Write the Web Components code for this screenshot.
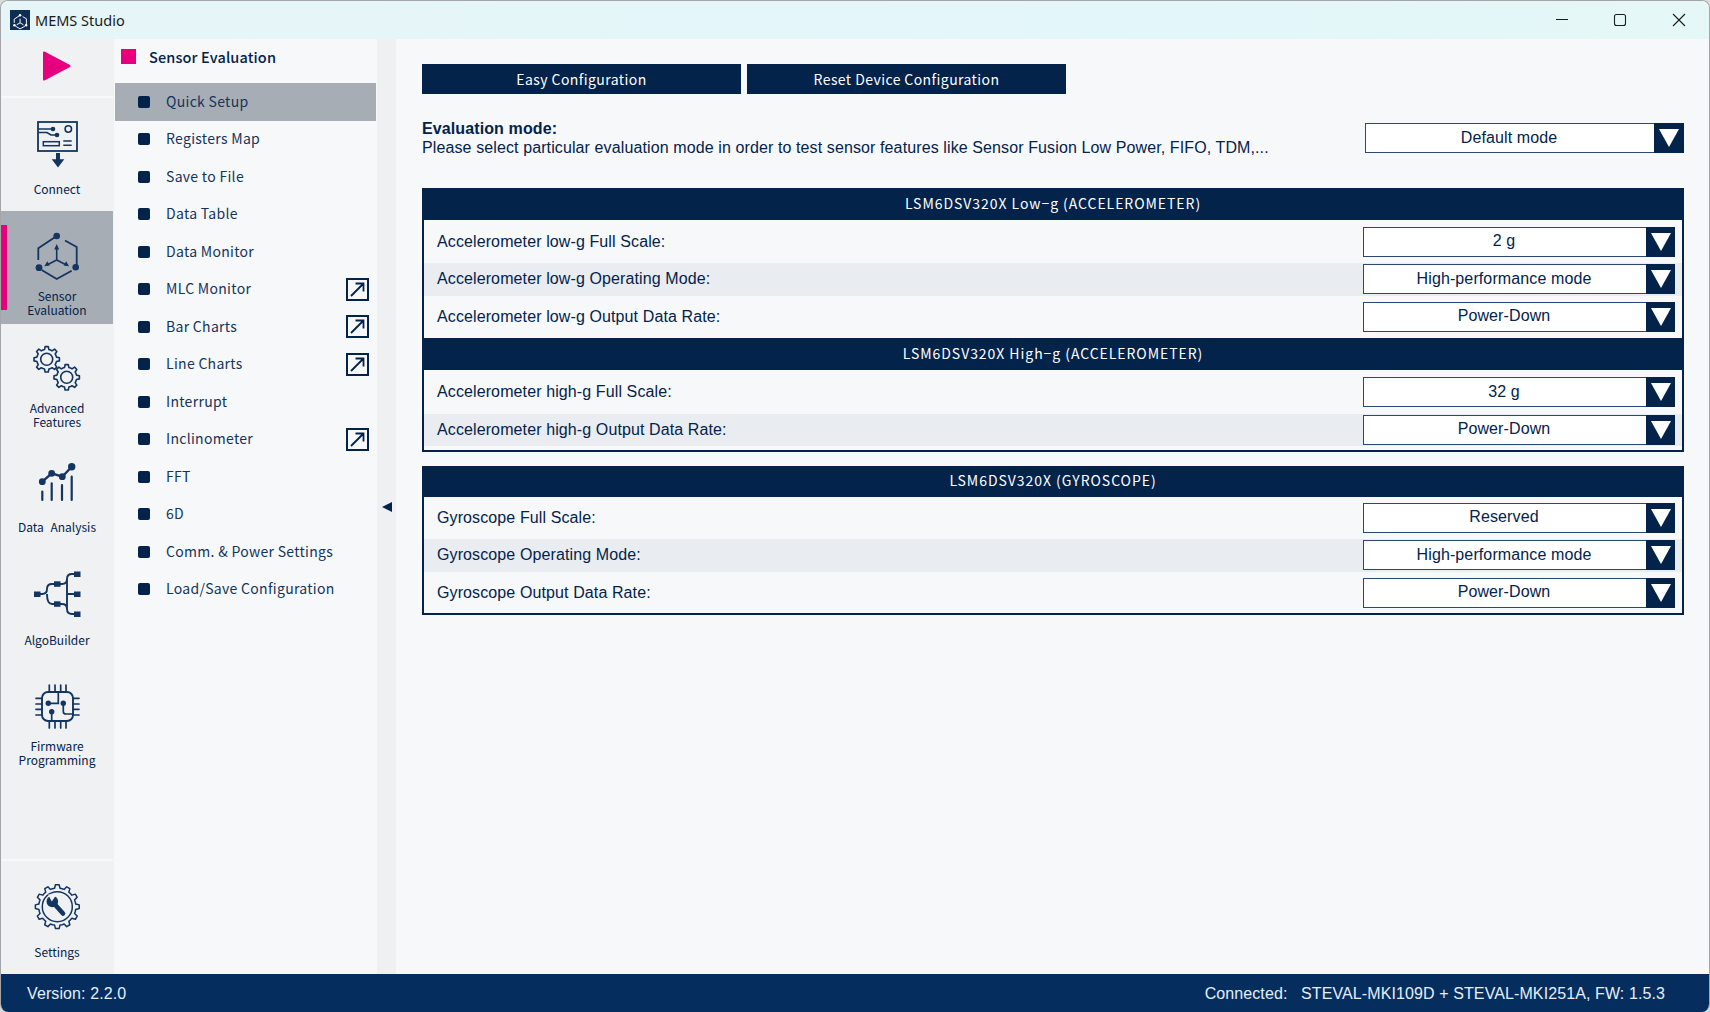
<!DOCTYPE html>
<html lang="en">
<head>
<meta charset="utf-8">
<title>MEMS Studio</title>
<style>
	html, body { margin: 0; height: 100%; background: #d9dbdd; }
	body { font-family: "Liberation Sans", Arial, sans-serif; color: #03234b; }
</style>
</head>
<body>
<app-window>
	<title-bar slot="title">MEMS Studio</title-bar>

	<side-rail slot="rail">
		<rail-item icon="connect">Connect</rail-item>
		<rail-item icon="sensor" active style="--lift: -1px">Sensor<br>Evaluation</rail-item>
		<rail-item icon="gears">Advanced<br>Features</rail-item>
		<rail-item icon="analysis" style="--lift: -5px">Data Analysis</rail-item>
		<rail-item icon="algo" style="--lift: -4px">AlgoBuilder</rail-item>
		<rail-item icon="chip" style="--lift: -4px">Firmware<br>Programming</rail-item>
		<rail-item icon="settings" slot="bottom">Settings</rail-item>
	</side-rail>

	<sub-nav slot="nav" heading="Sensor Evaluation">
		<nav-row selected>Quick Setup</nav-row>
		<nav-row>Registers Map</nav-row>
		<nav-row>Save to File</nav-row>
		<nav-row>Data Table</nav-row>
		<nav-row>Data Monitor</nav-row>
		<nav-row popout>MLC Monitor</nav-row>
		<nav-row popout>Bar Charts</nav-row>
		<nav-row popout>Line Charts</nav-row>
		<nav-row>Interrupt</nav-row>
		<nav-row popout>Inclinometer</nav-row>
		<nav-row>FFT</nav-row>
		<nav-row>6D</nav-row>
		<nav-row>Comm. &amp; Power Settings</nav-row>
		<nav-row>Load/Save Configuration</nav-row>
	</sub-nav>

	<main-pane slot="main">
		<action-button slot="actions">Easy Configuration</action-button>
		<action-button slot="actions">Reset Device Configuration</action-button>

		<strong slot="mode-title">Evaluation mode:</strong>
		<span slot="mode-text">Please select particular evaluation mode in order to test sensor features like Sensor Fusion Low Power, FIFO, TDM,...</span>
		<drop-down slot="mode-select" wide>Default mode</drop-down>

		<config-panel>
			<panel-head>LSM6DSV320X Low−g (ACCELEROMETER)</panel-head>
			<config-row value="2 g">Accelerometer low-g Full Scale:</config-row>
			<config-row value="High-performance mode" alt>Accelerometer low-g Operating Mode:</config-row>
			<config-row value="Power-Down">Accelerometer low-g Output Data Rate:</config-row>
			<panel-head>LSM6DSV320X High−g (ACCELEROMETER)</panel-head>
			<config-row value="32 g">Accelerometer high-g Full Scale:</config-row>
			<config-row value="Power-Down" alt>Accelerometer high-g Output Data Rate:</config-row>
		</config-panel>

		<config-panel>
			<panel-head tight>LSM6DSV320X (GYROSCOPE)</panel-head>
			<config-row value="Reserved">Gyroscope Full Scale:</config-row>
			<config-row value="High-performance mode" alt>Gyroscope Operating Mode:</config-row>
			<config-row value="Power-Down">Gyroscope Output Data Rate:</config-row>
		</config-panel>
	</main-pane>

	<status-bar slot="status">
		<span>Version: 2.2.0</span>
		<span slot="right">Connected:&nbsp;&nbsp;&nbsp;STEVAL-MKI109D + STEVAL-MKI251A, FW: 1.5.3</span>
	</status-bar>
</app-window>

<script>
const NAVY = '#03234b';
const UI_FONT = '"Noto Sans CJK JP", "Noto Sans", sans-serif';

// Outline of a cog wheel, used by the two gear icons
const gearPath = (cx, cy, rOut, rIn, teeth) => {
	let d = '';
	const step = (Math.PI * 2) / teeth;
	for (let i = 0; i < teeth; i++) {
		const a = i * step;
		const pts = [
			[rIn, a - step * 0.5],
			[rIn, a - step * 0.28],
			[rOut, a - step * 0.16],
			[rOut, a + step * 0.16],
			[rIn, a + step * 0.28],
		];
		pts.forEach((p, j) => {
			const x = (cx + p[0] * Math.cos(p[1])).toFixed(2);
			const y = (cy + p[0] * Math.sin(p[1])).toFixed(2);
			d += (i === 0 && j === 0 ? 'M' : 'L') + x + ' ' + y + ' ';
		});
	}
	return d + 'Z';
};

// Rail icons share one 60x78 box, drawn in the item's own coordinates
const ICONS = {
	connect: `<g transform="translate(0 -1)">
		<rect x="11" y="25" width="39" height="29" fill="none" stroke-width="1.8"/>
		<path d="M11 32H26M11 35.5H20L24 38H30" fill="none" stroke-width="1.6"/>
		<circle cx="26" cy="32" r="2.3" stroke="none"/>
		<circle cx="30" cy="38" r="2.3" stroke="none"/>
		<circle cx="41.3" cy="32" r="3.2" fill="none" stroke-width="1.6"/>
		<rect x="16.3" y="44.7" width="16" height="4" fill="none" stroke-width="1.5"/>
		<path d="M36.3 44H44.7M36.3 48.2H44.7" fill="none" stroke-width="1.5"/>
		<path d="M29 56H33V62.3H37.3L31 70.5L24.7 62.3H29Z" stroke="none"/></g>`,
	sensor: `
		<path d="M29.7 25L11.3 37.3V49M38 29.5L49.7 36V56M14.7 59L29.7 68L44.7 59.7" fill="none" stroke-width="1.8"/>
		<circle cx="29.7" cy="25" r="3.3" stroke="none"/>
		<circle cx="12" cy="56.7" r="3.4" stroke="none"/>
		<circle cx="48.7" cy="56.3" r="3.3" stroke="none"/>
		<path d="M29.7 49V37M29.7 49L20 54M29.7 49L39.4 54" fill="none" stroke-width="1.6"/>
		<path d="M29.7 33L32.2 38.5H27.2ZM17.3 55.3L20.3 50.3L22.8 54.6ZM42.1 55.3L39.1 50.3L36.6 54.6Z" stroke="none"/>`,
	gears: `
		<path d="${gearPath(19.7, 35.3, 12.8, 10, 8)}" fill="none" stroke-width="1.6" stroke-linejoin="round"/>
		<circle cx="19.7" cy="35.3" r="6" fill="none" stroke-width="1.6"/>
		<path d="${gearPath(39.7, 53.3, 12.8, 10, 8)}" fill="none" stroke-width="1.6" stroke-linejoin="round"/>
		<circle cx="39.7" cy="53.3" r="6" fill="none" stroke-width="1.6"/>`,
	analysis: `
		<path d="M15.3 44.7L24.7 36.3L35.3 39.7L44.7 29.7" fill="none" stroke-width="2.4"/>
		<circle cx="15.3" cy="44.7" r="3.4" stroke="none"/>
		<circle cx="24.7" cy="36.3" r="3.4" stroke="none"/>
		<circle cx="35.3" cy="39.7" r="3.4" stroke="none"/>
		<circle cx="44.7" cy="29.7" r="3.7" stroke="none"/>
		<path d="M15.3 54.5V63M24.7 46.3V63M35 48V63M44.7 39.7V63" fill="none" stroke-width="2.2" stroke-linecap="round"/>`,
	algo: `
		<path d="M10 44H15Q20 44 20 39Q20 34 25 34H35Q40 34 40 29Q40 24 45 24H50M20 44Q20 54 25 54H35Q40 54 40 59Q40 64 45 64H50M40 29V59M40 44H50" fill="none" stroke-width="1.9"/>
		<rect x="7" y="41.5" width="6.5" height="5.5" stroke="none"/>
		<rect x="27" y="31.3" width="6.5" height="5.5" stroke="none"/>
		<rect x="27" y="51.3" width="6.5" height="5.5" stroke="none"/>
		<rect x="47" y="21.5" width="6.5" height="5.5" stroke="none"/>
		<rect x="47" y="41.5" width="6.5" height="5.5" stroke="none"/>
		<rect x="47" y="61.5" width="6.5" height="5.5" stroke="none"/>`,
	chip: `
		<rect x="15" y="29" width="31" height="29" rx="6" fill="none" stroke-width="1.9"/>
		<path d="M22.3 22V29M28 22V29M33.7 22V29M39 22V29M22.3 58V65M28 58V65M33.7 58V65M39 58V65M9 35.3H15M9 41H15M9 46.3H15M9 52H15M46 35.3H52M46 41H52M46 46.3H52M46 52H52" fill="none" stroke-width="1.7" stroke-linecap="round"/>
		<path d="M21.3 40.3H31.3V29.5M36.3 40V48.5Q36.3 51 39 51H46M24.7 48.7V58" fill="none" stroke-width="1.7"/>
		<circle cx="21.3" cy="40.3" r="2.7" stroke="none"/>
		<circle cx="36.3" cy="40.3" r="2.7" stroke="none"/>
		<circle cx="24.7" cy="48.7" r="2.7" stroke="none"/>`,
	settings: `
		<path d="${gearPath(30.3, 45.7, 22, 18.6, 12)}" fill="none" stroke-width="1.5" stroke-linejoin="round"/>
		<circle cx="30.3" cy="45.7" r="15" fill="none" stroke-width="1.5"/>
		<path d="M27 42.5L36 52.5" fill="none" stroke-width="4.6" stroke-linecap="round"/>
		<circle cx="25.3" cy="40.5" r="5.8" stroke="none"/>
		<path d="M24.8 40.6L21 33.5L29.5 33.5Z" fill="#eff1f3" stroke="none"/>`,
};

class AppWindow extends HTMLElement {
	constructor() {
		super();
		this.attachShadow({ mode: 'open' }).innerHTML = `
			<style>
				:host {
					display: flex;
					flex-direction: column;
					box-sizing: border-box;
					width: 1710px;
					height: 1012px;
					border: 1px solid #a3a5a8;
					border-bottom: 0;
					border-radius: 8px;
					overflow: hidden;
					background: #f7f8fa;
				}
				.body { flex: 1; display: flex; min-height: 0; }
				.splitter {
					width: 19px;
					background: #eff0f2;
					display: flex;
					align-items: center;
					justify-content: center;
				}
				.splitter i {
					width: 0; height: 0;
					border-style: solid;
					border-width: 5px 10px 5px 0;
					border-color: transparent ${NAVY} transparent transparent;
				}
			</style>
			<slot name="title"></slot>
			<div class="body">
				<slot name="rail"></slot>
				<slot name="nav"></slot>
				<div class="splitter"><i></i></div>
				<slot name="main"></slot>
			</div>
			<slot name="status"></slot>`;
	}
}

class TitleBar extends HTMLElement {
	constructor() {
		super();
		this.attachShadow({ mode: 'open' }).innerHTML = `
			<style>
				:host {
					display: flex;
					align-items: center;
					flex: none;
					height: 38px;
					background: linear-gradient(90deg, #e6f5f8, #e3f6f9 70%, #e5f7f6);
					font: 14.5px "Noto Sans", sans-serif;
					color: #1b1b1b;
				}
				.logo { margin: 0 5px 0 9px; display: block; }
				.name { flex: 1; }
				.ctl { display: flex; }
				.ctl svg { display: block; width: 58px; height: 38px; }
			</style>
			<svg class="logo" width="20" height="20" viewBox="0 0 60 60">
				<rect width="60" height="60" fill="#0f2c52"/>
				<g stroke="#fff" fill="#fff" transform="translate(2 -8) scale(.95)">
					<path d="M29.7 25L11.3 37.3V49M38 29.5L49.7 36V56M14.7 59L29.7 68L44.7 59.7" fill="none" stroke-width="3"/>
					<circle cx="29.7" cy="25" r="4" stroke="none"/>
					<circle cx="12" cy="56.7" r="4" stroke="none"/>
					<circle cx="48.7" cy="56.3" r="4" stroke="none"/>
					<path d="M29.7 49V36M29.7 49L19 55M29.7 49L40.4 55" fill="none" stroke-width="3"/>
				</g>
			</svg>
			<span class="name"><slot></slot></span>
			<div class="ctl">
				<svg viewBox="0 0 58 38"><path d="M21 18.5H33" stroke="#1b1b1b" fill="none"/></svg>
				<svg viewBox="0 0 58 38"><rect x="21.5" y="13.5" width="11" height="11" rx="2" stroke="#1b1b1b" stroke-width="1.1" fill="none"/></svg>
				<svg viewBox="0 0 58 38"><path d="M22 13L34 25M34 13L22 25" stroke="#1b1b1b" stroke-width="1.1" fill="none"/></svg>
			</div>`;
	}
}

class SideRail extends HTMLElement {
	constructor() {
		super();
		this.attachShadow({ mode: 'open' }).innerHTML = `
			<style>
				:host {
					display: flex;
					flex-direction: column;
					flex: none;
					width: 112px;
					height: 100%;
					background: #eff1f3;
				}
				.play {
					flex: none;
					height: 57px;
					display: flex;
					align-items: center;
					justify-content: center;
					border-bottom: 2px solid #f7f8fa;
				}
				.play svg { display: block; margin-top: -3px; }
				.list { flex: 1; }
				.bottom { flex: none; border-top: 2px solid #f7f8fa; }
			</style>
			<div class="play">
				<svg width="30" height="32" viewBox="0 0 30 32">
					<path d="M2 2.5L27.5 16L2 29.5Z" fill="#e6007e" stroke="#e6007e" stroke-width="2" stroke-linejoin="round"/>
				</svg>
			</div>
			<div class="list"><slot></slot></div>
			<div class="bottom"><slot name="bottom"></slot></div>`;
	}
}

class RailItem extends HTMLElement {
	constructor() {
		super();
		this.attachShadow({ mode: 'open' }).innerHTML = `
			<style>
				:host {
					display: grid;
					grid-template-rows: 78px 28px;
					justify-items: center;
					position: relative;
					height: 113px;
					font: 12px/14px ${UI_FONT};
					word-spacing: 4px;
					color: ${NAVY};
					text-align: center;
				}
				:host([active]) { background: #a7adb5; }
				:host([active])::before {
					content: "";
					position: absolute;
					left: 0; top: 14px;
					width: 6px; height: 85px;
					background: #e6007e;
				}
				svg { display: block; width: 60px; height: 78px; overflow: visible; fill: #143560; stroke: #143560; }
				.label { align-self: center; white-space: nowrap; margin-top: var(--lift, -2px); }
			</style>
			<svg viewBox="0 0 60 78">${ICONS[this.getAttribute('icon')] || ''}</svg>
			<div class="label"><slot></slot></div>`;
	}
}

class SubNav extends HTMLElement {
	constructor() {
		super();
		this.attachShadow({ mode: 'open' }).innerHTML = `
			<style>
				:host {
					display: block;
					flex: none;
					box-sizing: border-box;
					width: 264px;
					height: 100%;
					background: #f7f8fa;
					border-left: 1px solid #eff1f3;
				}
				.head {
					display: flex;
					align-items: center;
					gap: 13px;
					height: 38px;
					box-sizing: content-box;
					padding: 0 0 6px 7px;
					font: 500 14.5px ${UI_FONT};
					letter-spacing: .13px;
					color: ${NAVY};
				}
				.head i { width: 15px; height: 15px; background: #e6007e; margin-top: -3px; }
				.head span { margin-top: -4px; }
			</style>
			<div class="head"><i></i><span>${this.getAttribute('heading')}</span></div>
			<slot></slot>`;
	}
}

class NavRow extends HTMLElement {
	constructor() {
		super();
		const popout = this.hasAttribute('popout') ? `
			<svg class="pop" width="23" height="23" viewBox="0 0 23 23">
				<rect x="1" y="1" width="21" height="21" fill="none" stroke="${NAVY}" stroke-width="2"/>
				<path d="M5 18L17 6M9.5 5.5H17.5V13.5" fill="none" stroke="${NAVY}" stroke-width="1.8"/>
			</svg>` : '';
		this.attachShadow({ mode: 'open' }).innerHTML = `
			<style>
				:host {
					display: flex;
					align-items: center;
					height: 37.5px;
					margin: 0 1px;
					padding: 0 7px 0 23px;
					font: 14px ${UI_FONT};
					letter-spacing: .3px;
					color: #14345c;
				}
				:host([selected]) { background: #a7adb5; }
				i { width: 12px; height: 12px; border-radius: 2px; background: ${NAVY}; margin-right: 16px; }
				span { flex: 1; margin-top: -2px; }
				svg { display: block; }
			</style>
			<i></i><span><slot></slot></span>${popout}`;
	}
}

class MainPane extends HTMLElement {
	constructor() {
		super();
		this.attachShadow({ mode: 'open' }).innerHTML = `
			<style>
				:host {
					display: block;
					flex: 1;
					min-width: 0;
					box-sizing: border-box;
					padding: 25px 25px 0 26px;
					font: 16px/19px "Liberation Sans", Arial, sans-serif;
					letter-spacing: .11px;
					color: ${NAVY};
				}
				.actions { display: flex; gap: 6px; }
				.mode { display: flex; align-items: center; margin: 25px 0 30.5px; }
				.mode .text { flex: 1; }
				.mode .text slot { display: block; }
				.panels { display: grid; gap: 14px; }
			</style>
			<div class="actions"><slot name="actions"></slot></div>
			<div class="mode">
				<div class="text">
					<slot name="mode-title"></slot>
					<slot name="mode-text"></slot>
				</div>
				<slot name="mode-select"></slot>
			</div>
			<div class="panels"><slot></slot></div>`;
	}
}

class ActionButton extends HTMLElement {
	constructor() {
		super();
		this.attachShadow({ mode: 'open' }).innerHTML = `
			<style>
				:host {
					display: flex;
					align-items: center;
					justify-content: center;
					width: 319px;
					height: 30px;
					background: ${NAVY};
					color: #fff;
					font: 14px ${UI_FONT};
					letter-spacing: .42px;
				}
			</style>
			<slot></slot>`;
	}
}

class ConfigPanel extends HTMLElement {
	constructor() {
		super();
		this.attachShadow({ mode: 'open' }).innerHTML = `
			<style>
				:host {
					display: grid;
					row-gap: 5px;
					box-sizing: border-box;
					border: 2px solid ${NAVY};
					border-top: 0;
					padding-bottom: 3.5px;
				}
			</style>
			<slot></slot>`;
	}
}

class PanelHead extends HTMLElement {
	constructor() {
		super();
		this.attachShadow({ mode: 'open' }).innerHTML = `
			<style>
				:host {
					display: flex;
					align-items: center;
					justify-content: center;
					height: 32px;
					margin-bottom: 1px;
					padding-bottom: 2px;
					box-sizing: border-box;
					background: ${NAVY};
					color: #fff;
					font: 14px ${UI_FONT};
					letter-spacing: .95px;
				}
				:host([tight]) { height: 31px; margin-bottom: 0; }
			</style>
			<slot></slot>`;
	}
}

class ConfigRow extends HTMLElement {
	constructor() {
		super();
		this.attachShadow({ mode: 'open' }).innerHTML = `
			<style>
				:host {
					display: flex;
					align-items: center;
					justify-content: space-between;
					height: 32.5px;
					padding: 0 7px 0 13px;
					color: ${NAVY};
				}
				:host([alt]) { background: #e9ecf1; }
				span { margin-top: -1px; }
			</style>
			<span><slot></slot></span>
			<drop-down>${this.getAttribute('value')}</drop-down>`;
	}
}

class DropDown extends HTMLElement {
	constructor() {
		super();
		this.attachShadow({ mode: 'open' }).innerHTML = `
			<style>
				:host {
					display: flex;
					width: 312px;
					height: 30px;
					flex: none;
					box-sizing: border-box;
					background: #fff;
					color: ${NAVY};
				}
				:host([wide]) { width: 319px; }
				.value {
					flex: 1;
					display: flex;
					align-items: center;
					justify-content: center;
					border: 1.5px solid #2a4872;
					border-right: 0;
					box-sizing: border-box;
					padding: 0 2px 2px 0;
				}
				.btn {
					flex: none;
					width: 29px;
					background: ${NAVY};
					display: flex;
					align-items: center;
					justify-content: center;
				}
				:host([wide]) .btn { width: 30px; }
				.btn i {
					width: 0; height: 0;
					border-style: solid;
					border-width: 18px 10px 0;
					border-color: #fff transparent transparent;
				}
			</style>
			<div class="value"><slot></slot></div>
			<div class="btn"><i></i></div>`;
	}
}

class StatusBar extends HTMLElement {
	constructor() {
		super();
		this.attachShadow({ mode: 'open' }).innerHTML = `
			<style>
				:host {
					display: flex;
					align-items: center;
					justify-content: space-between;
					flex: none;
					box-sizing: border-box;
					height: 38px;
					padding: 2px 44px 0 26px;
					background: #052e5f;
					color: #e6eef8;
					font: 16px "Liberation Sans", Arial, sans-serif;
					letter-spacing: .1px;
				}
			</style>
			<slot></slot>
			<slot name="right"></slot>`;
	}
}

customElements.define('drop-down', DropDown);
customElements.define('app-window', AppWindow);
customElements.define('title-bar', TitleBar);
customElements.define('side-rail', SideRail);
customElements.define('rail-item', RailItem);
customElements.define('sub-nav', SubNav);
customElements.define('nav-row', NavRow);
customElements.define('main-pane', MainPane);
customElements.define('action-button', ActionButton);
customElements.define('config-panel', ConfigPanel);
customElements.define('panel-head', PanelHead);
customElements.define('config-row', ConfigRow);
customElements.define('status-bar', StatusBar);
</script>
</body>
</html>
